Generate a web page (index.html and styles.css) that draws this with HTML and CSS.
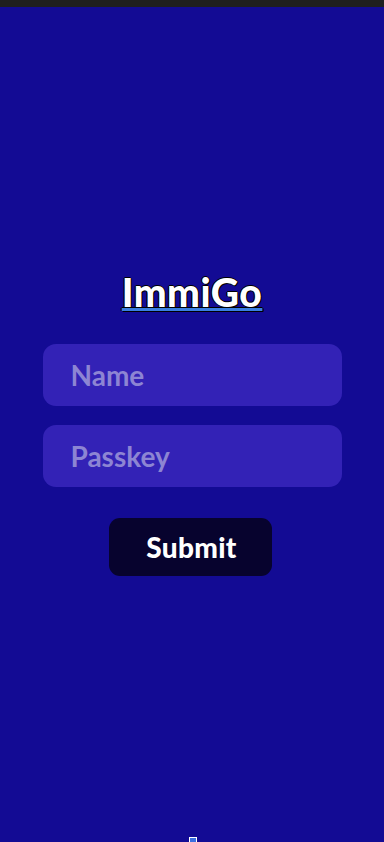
FILE: index.html
```html
<!DOCTYPE html>
<html>
<head>
<meta charset="utf-8">
<link rel="stylesheet" href="styles.css">
</head>
<body>
<div class="statusbar"></div>
<main class="screen">
  <h1 class="title">ImmiGo</h1>
  <form class="form">
    <div class="field"><span class="placeholder">Name</span></div>
    <div class="field"><span class="placeholder">Passkey</span></div>
    <div class="actions"><button type="button" class="submit">Submit</button></div>
  </form>
  <div class="spacer"></div>
  <div class="handle"></div>
</main>
</body>
</html>
```
FILE: styles.css
```css
html, body {
  margin: 0;
  padding: 0;
  height: 100%;
}
body {
  background: #130b94;
  font-family: "Lato", "Noto Sans", sans-serif;
  display: flex;
  flex-direction: column;
  overflow: hidden;
}
.statusbar {
  height: 7px;
  background: #1f1f1f;
  flex: none;
}
.screen {
  flex: 1;
  display: flex;
  flex-direction: column;
  align-items: center;
}
.title {
  margin: 263px 0 0 0;
  font-size: 39px;
  line-height: 44px;
  font-weight: 900;
  color: #ffffff;
  letter-spacing: 0.5px;
  text-decoration: underline;
  text-decoration-color: #3a7ee0;
  text-decoration-thickness: 3px;
  text-underline-offset: 1px;
  text-shadow: 1px 1px 0 #000, -1px 0 0 #000, 0 -1px 0 #000, 1px 0 0 #000;
}
.form {
  margin-top: 30px;
  width: 299px;
  display: flex;
  flex-direction: column;
  gap: 19px;
}
.field {
  height: 62px;
  background: #3322b6;
  border-radius: 13px;
  display: flex;
  align-items: center;
  padding-left: 28px;
}
.placeholder {
  color: #8d85d3;
  font-size: 28px;
  font-weight: 700;
}
.actions {
  display: flex;
  justify-content: flex-start;
  padding-left: 66px;
  margin-top: 12px;
}
.submit {
  width: 163px;
  height: 58px;
  background: #07032e;
  border: none;
  border-radius: 11px;
  color: #ffffff;
  font-family: "Lato", "Noto Sans", sans-serif;
  font-size: 28px;
  font-weight: 900;
  padding: 0 0 0 3px;
  letter-spacing: 0.3px;
}
.spacer {
  flex: 1;
}
.handle {
  width: 6px;
  height: 4px;
  background: #3a6fe0;
  border: 1px solid #ffffff;
  border-bottom: none;
  margin-left: 1px;
}
```
